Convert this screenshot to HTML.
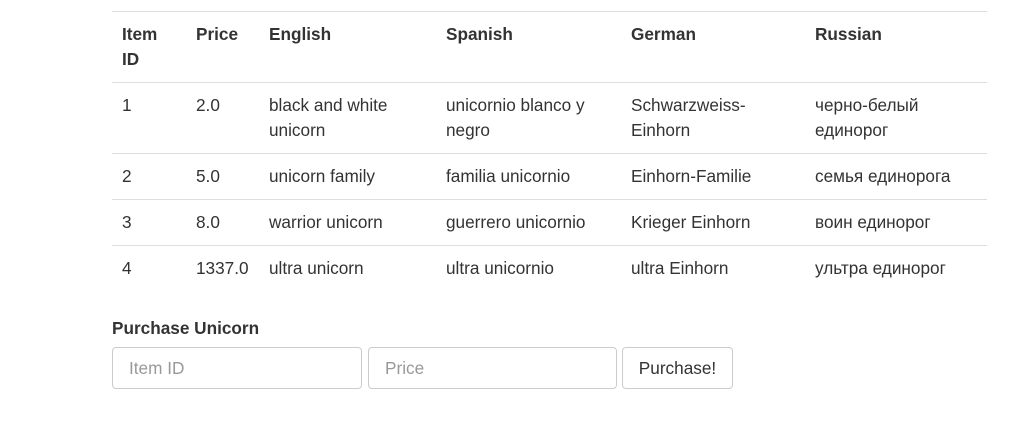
<!DOCTYPE html>
<html><head><meta charset="utf-8"><style>
body{margin:0;background:#fff;font-family:"Liberation Sans",Arial,sans-serif;font-size:17.2px;color:#333;}
table{position:absolute;left:112px;top:11px;border-collapse:collapse;width:875px;table-layout:fixed;}
td,th{padding:10px 10px 10px 10px;line-height:25px;vertical-align:top;text-align:left;border-top:1px solid #ddd;}
th{font-weight:bold;border-bottom:1px solid #ddd;}
.lbl{position:absolute;left:112px;top:317px;font-weight:bold;line-height:22px;}
.in{position:absolute;top:347px;height:42px;box-sizing:border-box;border:1px solid #ccc;border-radius:4px;color:#999;padding:0 16px;line-height:40px;}
.btn{position:absolute;top:347px;left:622px;width:111px;height:42px;box-sizing:border-box;border:1px solid #ccc;border-radius:4px;color:#333;text-align:center;line-height:40px;}
</style></head><body>
<table>
<colgroup><col style="width:74px"><col style="width:73px"><col style="width:177px"><col style="width:185px"><col style="width:184px"><col style="width:182px"></colgroup>
<tr><th>Item<br>ID</th><th>Price</th><th>English</th><th>Spanish</th><th>German</th><th>Russian</th></tr>
<tr><td>1</td><td>2.0</td><td>black and white unicorn</td><td>unicornio blanco y negro</td><td>Schwarzweiss-<br>Einhorn</td><td>черно-белый единорог</td></tr>
<tr><td>2</td><td>5.0</td><td>unicorn family</td><td>familia unicornio</td><td>Einhorn-Familie</td><td>семья единорога</td></tr>
<tr><td>3</td><td>8.0</td><td>warrior unicorn</td><td>guerrero unicornio</td><td>Krieger Einhorn</td><td>воин единорог</td></tr>
<tr><td>4</td><td>1337.0</td><td>ultra unicorn</td><td>ultra unicornio</td><td>ultra Einhorn</td><td>ультра единорог</td></tr>
</table>
<div class="lbl">Purchase Unicorn</div>
<div class="in" style="left:112px;width:250px">Item ID</div>
<div class="in" style="left:368px;width:249px">Price</div>
<div class="btn">Purchase!</div>
</body></html>
